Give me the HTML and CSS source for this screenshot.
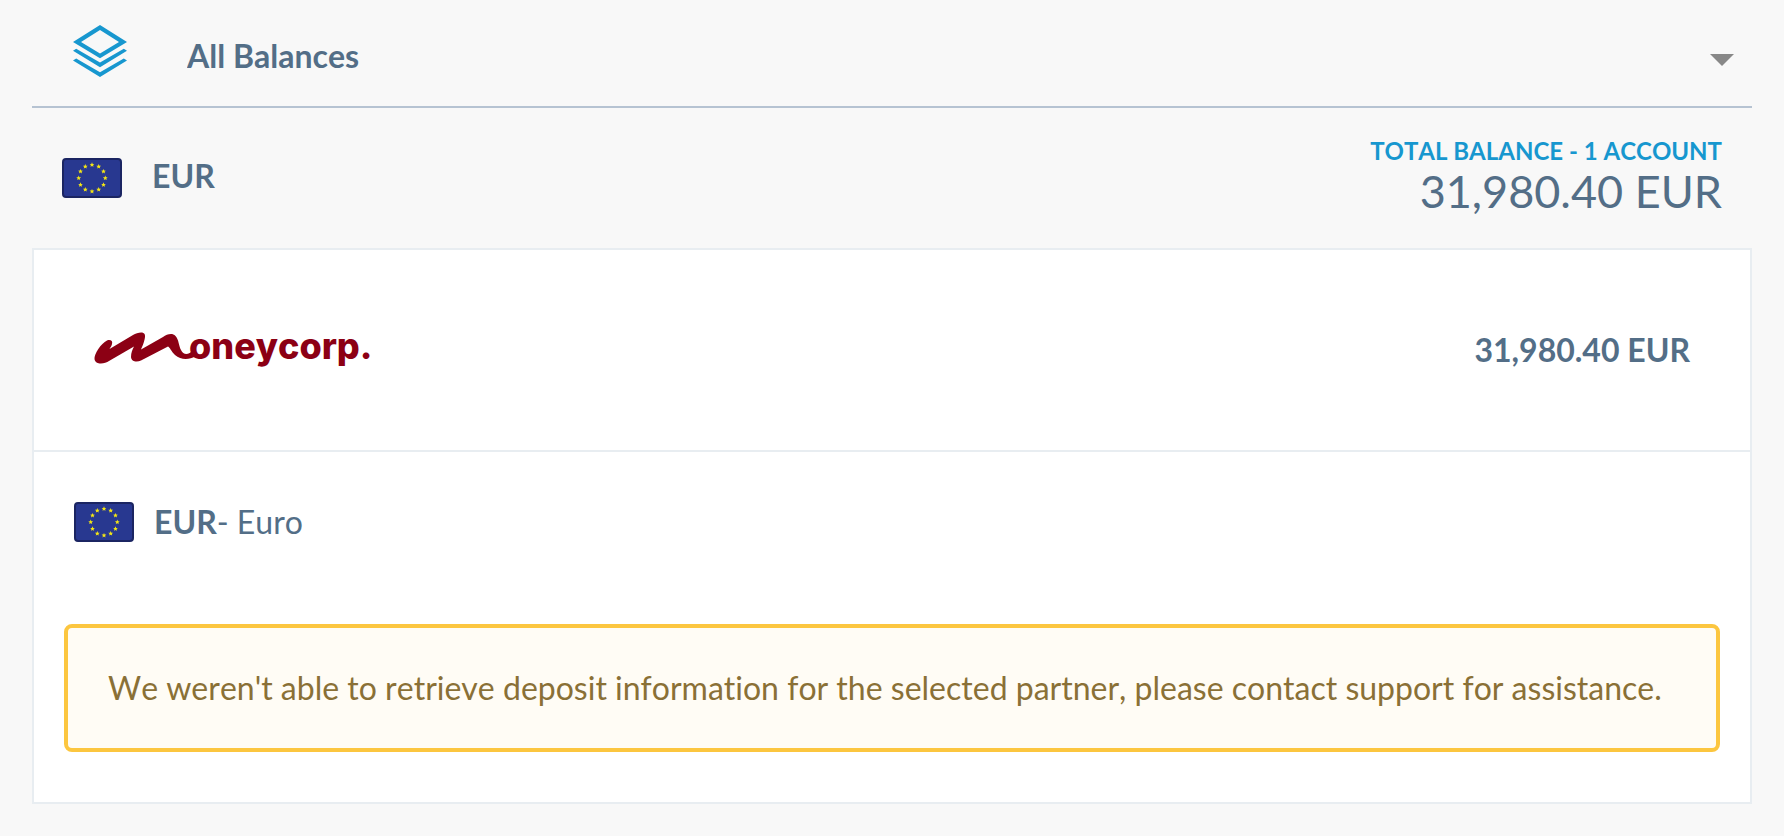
FILE: index.html
```html
<!DOCTYPE html>
<html lang="en">
<head>
<meta charset="utf-8">
<meta name="viewport" content="width=device-width, initial-scale=1">
<title>Balances</title>
<link rel="stylesheet" href="styles.css">
</head>
<body>
<svg class="sprite" aria-hidden="true">
  <defs>
    <path id="star" fill="#f4e615" d="M0-2.4 .7-.8 2.4-.7 1.1.4 1.5 2.1 0 1.2-1.5 2.1-1.1.4-2.4-.7-.7-.8Z"/>
    <symbol id="flag-eu" viewBox="0 0 60 40">
      <rect x="1" y="1" width="58" height="38" rx="3" fill="#283890" stroke="#1b2562" stroke-width="2"/>
      <use href="#star" x="30" y="6.7"/>
      <use href="#star" x="36.7" y="8.5"/>
      <use href="#star" x="41.5" y="13.4"/>
      <use href="#star" x="43.3" y="20"/>
      <use href="#star" x="41.5" y="26.7"/>
      <use href="#star" x="36.7" y="31.5"/>
      <use href="#star" x="30" y="33.3"/>
      <use href="#star" x="23.3" y="31.5"/>
      <use href="#star" x="18.5" y="26.7"/>
      <use href="#star" x="16.7" y="20"/>
      <use href="#star" x="18.5" y="13.4"/>
      <use href="#star" x="23.3" y="8.5"/>
    </symbol>
  </defs>
</svg>
<main class="page">
  <div class="picker">
    <svg class="picker-icon" viewBox="0 0 54 52" aria-hidden="true">
      <path fill="#1797cf" fill-rule="evenodd" d="M27 0 54 17 27 33.3 0 17ZM27 5 8 17 27 28.6 46 17Z"/>
      <path fill="#1797cf" d="M0 25.7 3.2 23.7 27 37.4 50.8 23.7 54 25.7 27 42.3Z"/>
      <path fill="#1797cf" d="M0 35.5 3.2 33.5 27 47.2 50.8 33.5 54 35.5 27 52Z"/>
    </svg>
    <select class="picker-select" aria-label="Balances shown">
      <option>All Balances</option>
    </select>
    <svg class="picker-arrow" viewBox="0 0 24 12" aria-hidden="true"><path fill="#888" d="M0 0H24L12 12Z"/></svg>
  </div>

  <header class="summary">
    <div class="summary-currency">
      <svg class="flag" aria-hidden="true"><use href="#flag-eu"/></svg>
      <h2 class="code">EUR</h2>
    </div>
    <div class="summary-total">
      <p class="total-label">TOTAL BALANCE - 1 ACCOUNT</p>
      <p class="total-amount">31,980.40 EUR</p>
    </div>
  </header>

  <section class="card">
    <div class="partner">
      <svg class="logo" viewBox="-1 -1 280 36" role="img" aria-label="moneycorp.">
        <path fill="#8c0014" d="M-.5 26C-1 21 6 10.500 12 7.500C15.500 6.200 18 8 17 11C16.500 13 15.500 14.500 14.500 16L38 2C42 .0 48-2 49.800 1.500C51 5 47.500 13 46 16.500L68 4C72 1.500 77-.5 80.500 3C84 7 83.500 12 86 17C88.500 22.500 94 22 98 17L100 23.500C95 26.500 86 27.500 80 22C76 18 75 14.500 73 13.500L46 27.500C42 29.500 36.500 29 36 24C36 20 37.500 16 39 13.500L14 28C10 31 .5 32.500-.5 26Z"/>
        <text class="logo-text" x="94" y="26">oneycorp.</text>
      </svg>
      <p class="partner-amount">31,980.40 EUR</p>
    </div>
    <div class="details">
      <div class="currency">
        <svg class="flag" aria-hidden="true"><use href="#flag-eu"/></svg>
        <p class="currency-name"><strong>EUR</strong>- Euro</p>
      </div>
      <p class="alert" role="alert">We weren't able to retrieve deposit information for the selected partner, please contact support for assistance.</p>
    </div>
  </section>
</main>
</body>
</html>
```
FILE: styles.css
```css
* {
  box-sizing: border-box;
}

body {
  margin: 0;
  background: #f8f8f8;
  color: #536e87;
  font-family: Lato, "Open Sans", sans-serif;
  font-size: 32px;
  font-variant-ligatures: none;
  font-kerning: none;
  line-height: 40px;
}

h2,
p {
  margin: 0;
}

.sprite {
  position: absolute;
  width: 0;
  height: 0;
}

.page {
  padding: 0 32px 32px;
}

.picker {
  display: flex;
  align-items: center;
  gap: 60px;
  height: 108px;
  padding: 0 18px 4px 41px;
  border-bottom: 2px solid #b6c3d2;
}

.picker-icon {
  flex: none;
  width: 54px;
  height: 52px;
}

.picker-select {
  flex: 1;
  min-width: 0;
  height: 80px;
  padding: 10px 0 0;
  border: 0;
  background: transparent;
  color: inherit;
  font: inherit;
  font-kerning: none;
  font-weight: 700;
  appearance: none;
}

.picker-arrow {
  flex: none;
  width: 24px;
  height: 12px;
  margin-top: 18px;
}

.summary {
  display: flex;
  justify-content: space-between;
  align-items: center;
  height: 140px;
  padding: 0 30px;
}

.summary-currency {
  display: flex;
  align-items: center;
  gap: 30px;
}

.flag {
  flex: none;
  width: 60px;
  height: 40px;
}

.code {
  padding-bottom: 4px;
  font-size: 32px;
  font-weight: 700;
}

.summary-total {
  padding-bottom: 4px;
  text-align: right;
}

.total-label {
  color: #1797cf;
  font-size: 24px;
  font-weight: 700;
  line-height: 30px;
}

.total-amount {
  font-size: 45px;
  line-height: 50px;
}

.card {
  border: 2px solid #e8edf1;
  background: #fff;
}

.partner {
  display: flex;
  justify-content: space-between;
  align-items: center;
  height: 202px;
  padding: 0 60px;
  border-bottom: 2px solid #e8edf1;
}

.logo {
  width: 280px;
  height: 36px;
  overflow: visible;
}

.logo-text {
  fill: #8c0014;
  font-family: Inter, sans-serif;
  font-size: 36px;
  font-weight: 800;
}

.partner-amount {
  font-weight: 700;
}

.details {
  padding: 50px 30px;
}

.currency {
  display: flex;
  align-items: center;
  gap: 20px;
  padding: 0 10px;
}

.alert {
  margin-top: 82px;
  padding: 40px;
  border: 4px solid #fcc63f;
  border-radius: 8px;
  background: #fffcf5;
  color: #8a7036;
}
```
